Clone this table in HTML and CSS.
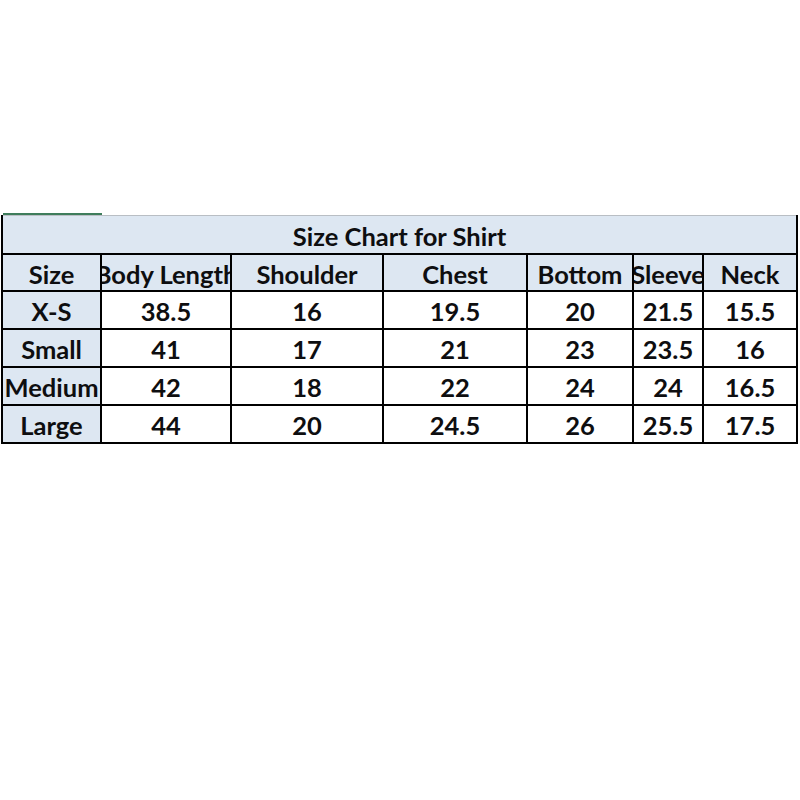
FILE: index.html
```
<!DOCTYPE html>
<html>
<head>
<meta charset="utf-8">
<link rel="stylesheet" href="styles.css">
</head>
<body>
<div class="sheet">
  <div class="tab-line"></div>
  <table class="chart">
    <colgroup>
      <col class="c-size">
      <col class="c-body">
      <col class="c-shoulder">
      <col class="c-chest">
      <col class="c-bottom">
      <col class="c-sleeve">
      <col class="c-neck">
    </colgroup>
    <tr class="title-row">
      <td colspan="7" class="title"><div class="fit">Size Chart for Shirt</div></td>
    </tr>
    <tr class="head-row">
      <td class="hd"><div class="fit">Size</div></td>
      <td class="hd"><div class="fit">Body Length</div></td>
      <td class="hd"><div class="fit">Shoulder</div></td>
      <td class="hd"><div class="fit">Chest</div></td>
      <td class="hd"><div class="fit">Bottom</div></td>
      <td class="hd"><div class="fit">Sleeve</div></td>
      <td class="hd"><div class="fit">Neck</div></td>
    </tr>
    <tr class="data-row">
      <td class="sz"><div class="fit">X-S</div></td>
      <td><div class="fit">38.5</div></td>
      <td><div class="fit">16</div></td>
      <td><div class="fit">19.5</div></td>
      <td><div class="fit">20</div></td>
      <td><div class="fit">21.5</div></td>
      <td><div class="fit">15.5</div></td>
    </tr>
    <tr class="data-row">
      <td class="sz"><div class="fit">Small</div></td>
      <td><div class="fit">41</div></td>
      <td><div class="fit">17</div></td>
      <td><div class="fit">21</div></td>
      <td><div class="fit">23</div></td>
      <td><div class="fit">23.5</div></td>
      <td><div class="fit">16</div></td>
    </tr>
    <tr class="data-row">
      <td class="sz"><div class="fit">Medium</div></td>
      <td><div class="fit">42</div></td>
      <td><div class="fit">18</div></td>
      <td><div class="fit">22</div></td>
      <td><div class="fit">24</div></td>
      <td><div class="fit">24</div></td>
      <td><div class="fit">16.5</div></td>
    </tr>
    <tr class="data-row">
      <td class="sz"><div class="fit">Large</div></td>
      <td><div class="fit">44</div></td>
      <td><div class="fit">20</div></td>
      <td><div class="fit">24.5</div></td>
      <td><div class="fit">26</div></td>
      <td><div class="fit">25.5</div></td>
      <td><div class="fit">17.5</div></td>
    </tr>
  </table>
</div>
</body>
</html>
```
FILE: styles.css
```
html, body {
  margin: 0;
  padding: 0;
  background: #ffffff;
}

.sheet {
  padding-top: 213px;
  font-family: "Lato", "Open Sans", sans-serif;
  font-weight: 700;
  color: #0e0e10;
}

.tab-line {
  width: 99px;
  height: 2px;
  margin-left: 3px;
  background: #3f7d5c;
}

.chart {
  margin-left: 1px;
  border-collapse: collapse;
  table-layout: fixed;
  width: 795px;
}

.c-size { width: 99px; }
.c-body { width: 130px; }
.c-shoulder { width: 152px; }
.c-chest { width: 144px; }
.c-bottom { width: 106px; }
.c-sleeve { width: 70px; }
.c-neck { width: 94px; }

.chart td {
  border: 2px solid #000;
  padding: 0;
  font-size: 25.5px;
  line-height: 30px;
  vertical-align: middle;
  background: #ffffff;
}

.fit {
  display: flex;
  justify-content: center;
  align-items: center;
  white-space: nowrap;
  overflow: hidden;
  padding-top: 3px;
}

.title-row { height: 38px; }
.head-row { height: 37px; }
.data-row { height: 38px; }

.chart td.title {
  background: #dde7f2;
  border-top: 1px solid #b9bec4;
  border-left: 2px solid #000;
  border-right: 2px solid #000;
}

.chart td.hd,
.chart td.sz {
  background: #dde7f2;
}
```
